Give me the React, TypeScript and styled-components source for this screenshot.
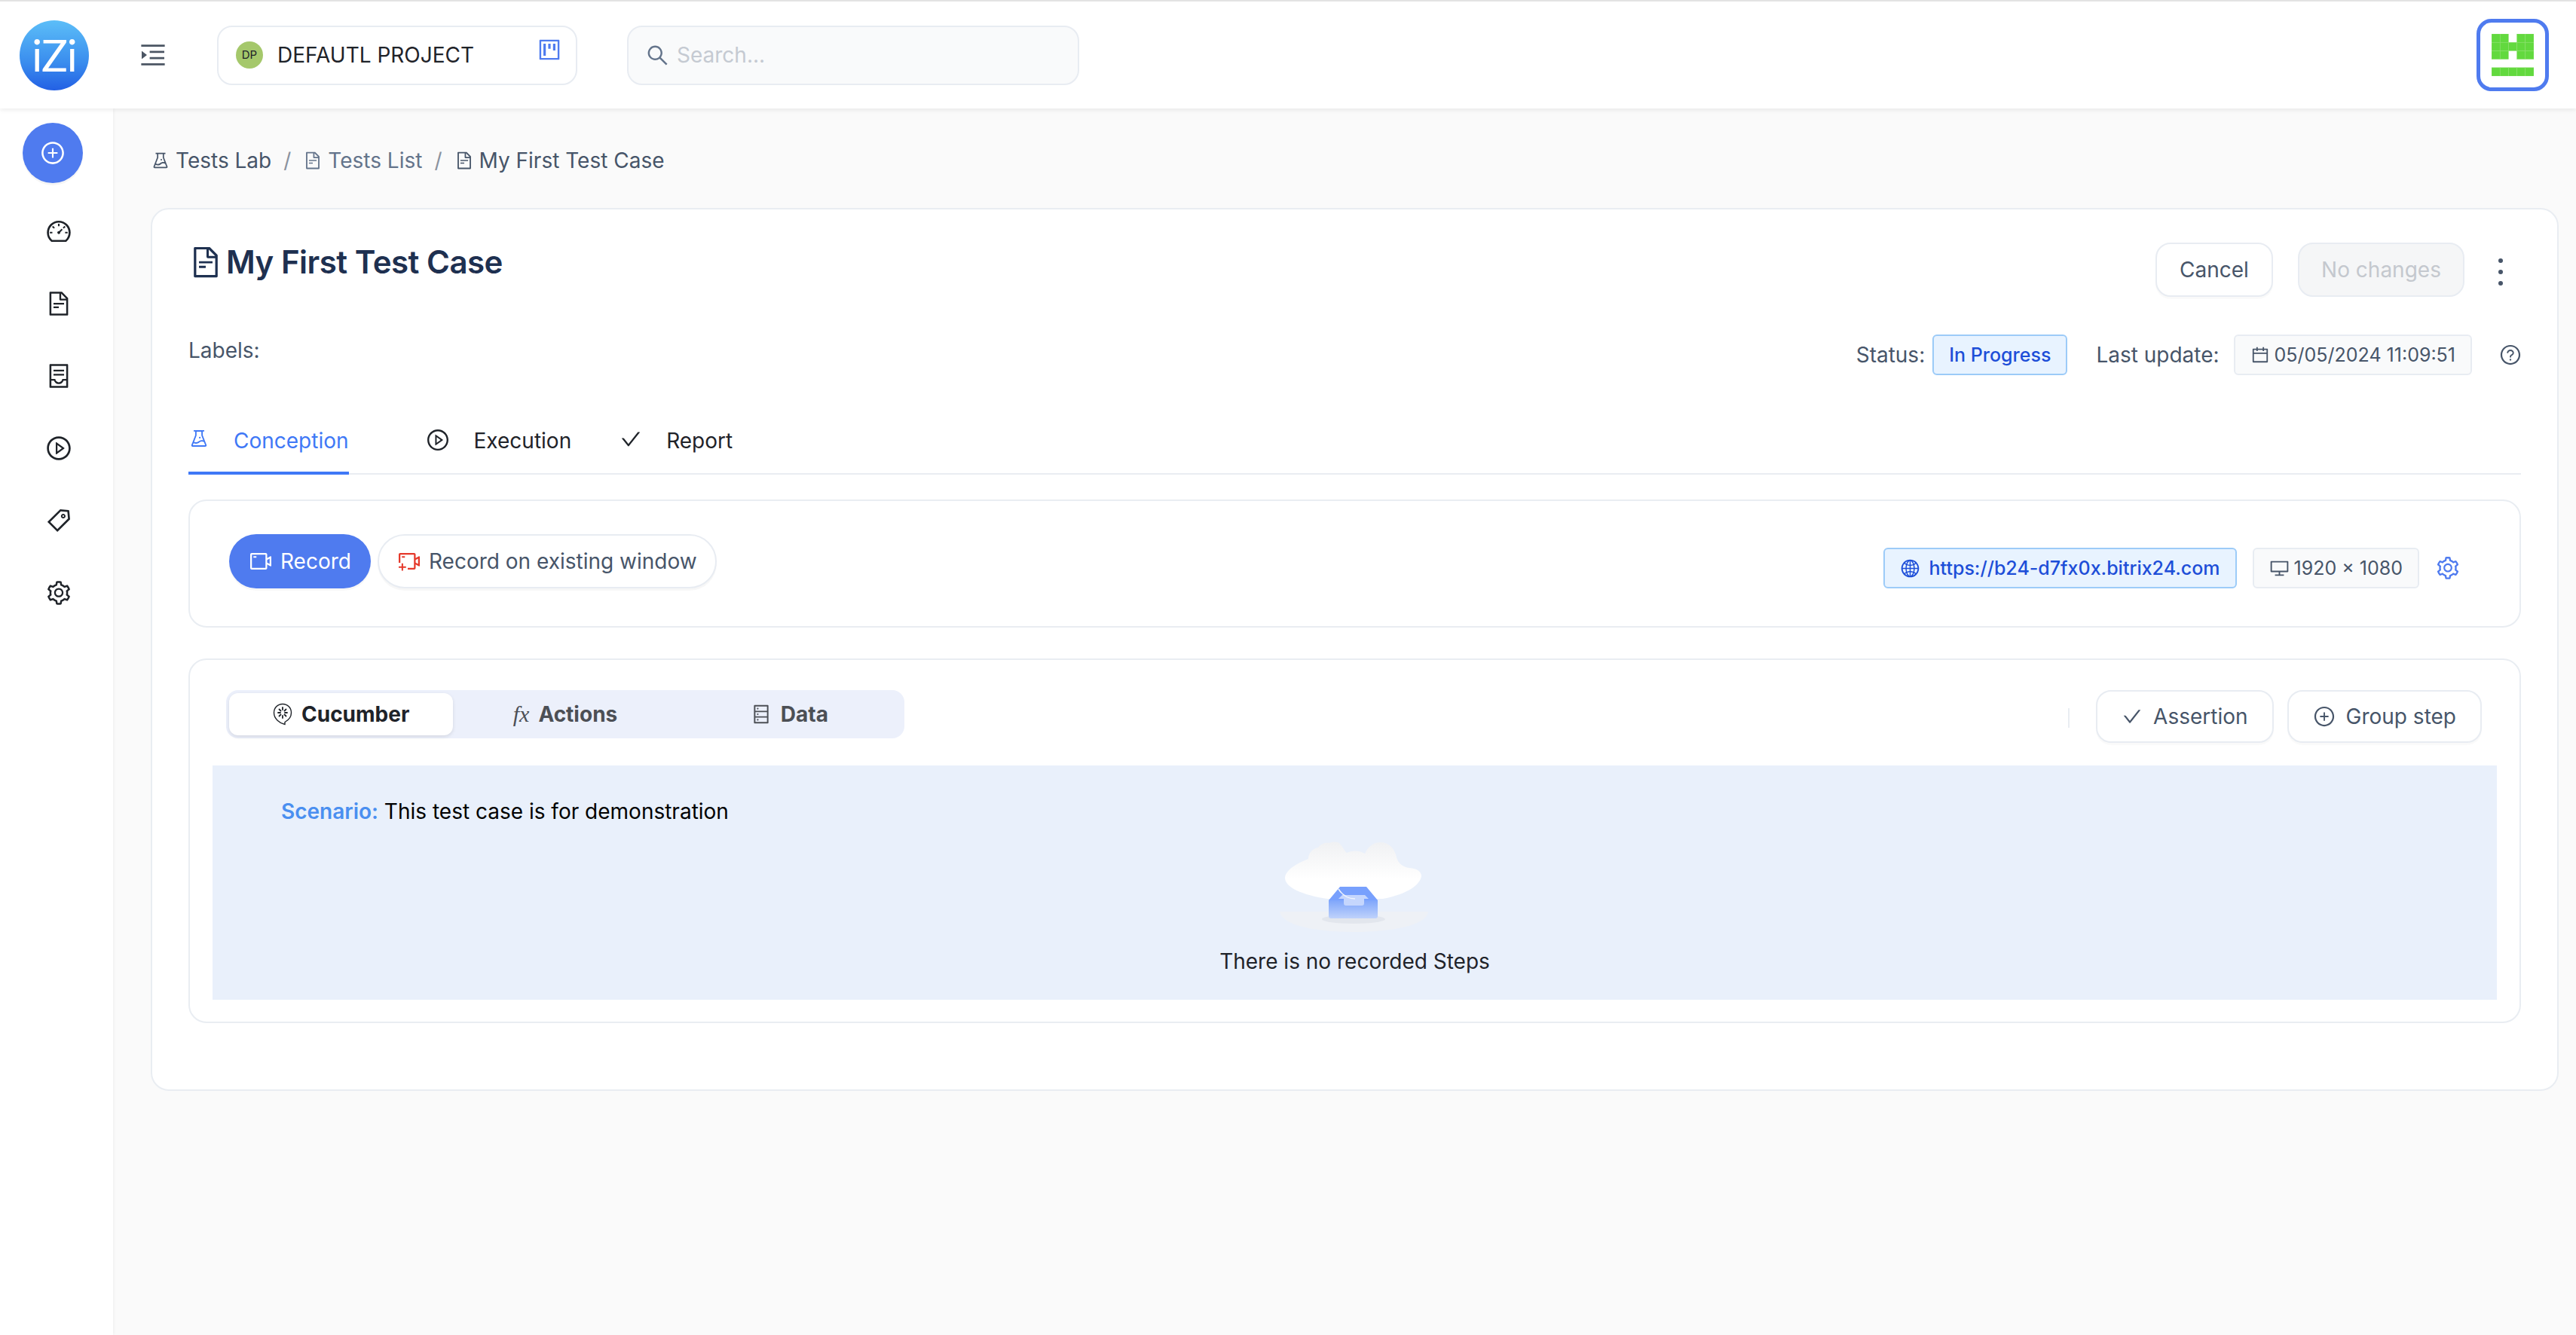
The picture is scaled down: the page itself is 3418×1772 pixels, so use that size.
import * as React from 'react';
import styled, { createGlobalStyle } from 'styled-components';
import {
	AiOutlineCalendar,
	AiOutlineCheck,
	AiOutlineContainer,
	AiOutlineDashboard,
	AiOutlineDatabase,
	AiOutlineDesktop,
	AiOutlineExperiment,
	AiOutlineFileText,
	AiOutlineGlobal,
	AiOutlineMenuUnfold,
	AiOutlinePlayCircle,
	AiOutlinePlusCircle,
	AiOutlineProject,
	AiOutlineQuestionCircle,
	AiOutlineSearch,
	AiOutlineSetting,
	AiOutlineTag,
	AiOutlineVideoCamera,
	AiOutlineVideoCameraAdd,
} from 'react-icons/ai';

const CucumberIcon = () => (
	<svg width="26" height="30" viewBox="0 0 26 30" fill="none" stroke="#1f2329" strokeWidth="1.4">
		<path d="M13 1.5c6.5 0 11.5 5 11.5 11.5 0 6-4 10-8.5 12.5v3C9 27 1.5 21 1.5 13 1.5 6.500 6.500 1.500 13 1.500z" />
		<path d="M13 6v3M13 17v3M7 13h3M16 13h3M8.500 8.500l2 2M15.500 15.500l2 2M17.500 8.500l-2 2M8.500 17.500l2-2" strokeWidth="1.800" strokeLinecap="round" />
	</svg>
);

const Identicon = () => {
	const cells = [
		[0, 0], [1, 0], [3, 0], [4, 0],
		[0, 1], [1, 1], [2, 1], [3, 1], [4, 1],
		[0, 2], [1, 2], [3, 2], [4, 2],
		[0, 4], [1, 4], [2, 4], [3, 4], [4, 4],
	];
	return (
		<svg width="56" height="56" viewBox="0 0 56 56">
			{cells.map(([x, y]) => (
				<rect key={`${x}-${y}`} x={x * 11.2} y={y * 11.2} width="11.2" height="11.2" fill="#62d93e" stroke="#8fe070" strokeWidth="0.5" />
			))}
		</svg>
	);
};

const EmptyCloud = () => (
	<svg width="200" height="130" viewBox="0 0 200 130">
		<defs>
			<linearGradient id="cloudFill" x1="0" y1="0" x2="0" y2="1">
				<stop offset="0" stopColor="#f0f1f3" />
				<stop offset="0.65" stopColor="#ffffff" />
			</linearGradient>
			<linearGradient id="boxFill" x1="0" y1="0" x2="0" y2="1">
				<stop offset="0" stopColor="#7fa6fb" />
				<stop offset="1" stopColor="#bfd2fb" />
			</linearGradient>
		</defs>
		<path d="M0 100H197C195 118 150 127 98 127 46 127 3 118 0 100Z" fill="#eef1f6" />
		<ellipse cx="98" cy="110" rx="42" ry="6" fill="#e2e6ed" />
		<path
			d="M7 55C8 45 22 36 38 30 38 22 44 16 51 15 55 9 62 8 66 9 71 7 77 7 80 10 84 14 86 20 89 22 95 19 105 18 113 23 118 12 126 8 134 8 146 8 153 18 155 28 157 36 164 41 172 42 183 43 188 47 188 53 186 64 172 76 137 83H63C30 78 7 68 7 55Z"
			fill="url(#cloudFill)"
		/>
		<path d="M65 85H130V106Q130 109 127 109H68Q65 109 65 106Z" fill="url(#boxFill)" />
		<path d="M65 85L80 67H115L130 85Z" fill="#78a0fd" />
		<path d="M78 83L83 78H113L118 83H112V89Q112 92 109 92H88Q85 92 85 89V83Z" fill="#c5d6fd" />
		<path d="M78 70C83 78 90 83 100 83" fill="none" stroke="#f2f5fc" strokeWidth="1.500" />
	</svg>
);

const App = () => {
	return (
		<>
			<GlobalStyle />
			<Page>
				<TopBar>
					<Logo>iZi</Logo>
					<MenuToggle>
						<AiOutlineMenuUnfold size={40} />
					</MenuToggle>
					<ProjectBox>
						<ProjectAvatar>DP</ProjectAvatar>
						<ProjectName>DEFAUTL PROJECT</ProjectName>
						<BoardIcon>
							<AiOutlineProject size={34} />
						</BoardIcon>
					</ProjectBox>
					<SearchBox>
						<AiOutlineSearch size={33} />
						<span>Search...</span>
					</SearchBox>
					<UserBox>
						<Identicon />
					</UserBox>
				</TopBar>
				<Body>
					<Sidebar>
						<AddButton>
							<AiOutlinePlusCircle size={34} />
						</AddButton>
						<NavList>
							<NavItem><AiOutlineDashboard size={36} /></NavItem>
							<NavItem><AiOutlineFileText size={36} /></NavItem>
							<NavItem><AiOutlineContainer size={36} /></NavItem>
							<NavItem><AiOutlinePlayCircle size={36} /></NavItem>
							<NavItem><AiOutlineTag size={36} /></NavItem>
							<NavItem><AiOutlineSetting size={36} /></NavItem>
						</NavList>
					</Sidebar>
					<Content>
						<Breadcrumb>
							<Crumb>
								<AiOutlineExperiment size={26} />
								Tests Lab
							</Crumb>
							<CrumbSlash>/</CrumbSlash>
							<Crumb $muted>
								<AiOutlineFileText size={26} />
								Tests List
							</Crumb>
							<CrumbSlash>/</CrumbSlash>
							<Crumb>
								<AiOutlineFileText size={26} />
								My First Test Case
							</Crumb>
						</Breadcrumb>
						<Card>
							<TitleRow>
								<Title>
									<AiOutlineFileText size={46} />
									My First Test Case
								</Title>
								<TitleActions>
									<OutlineButton>Cancel</OutlineButton>
									<DisabledButton>No changes</DisabledButton>
									<MoreButton>
										<i />
										<i />
										<i />
									</MoreButton>
								</TitleActions>
							</TitleRow>
							<MetaRow>
								<MetaLabel>Labels:</MetaLabel>
								<MetaRight>
									<StatusLabel>Status:</StatusLabel>
									<BlueTag>In Progress</BlueTag>
									<UpdateLabel>Last update:</UpdateLabel>
									<GreyTag>
										<AiOutlineCalendar size={26} />
										05/05/2024 11:09:51
									</GreyTag>
									<HelpIcon>
										<AiOutlineQuestionCircle size={30} />
									</HelpIcon>
								</MetaRight>
							</MetaRow>
							<Tabs>
								<Tab $active>
									<AiOutlineExperiment size={28} />
									Conception
								</Tab>
								<Tab>
									<AiOutlinePlayCircle size={32} />
									Execution
								</Tab>
								<Tab>
									<AiOutlineCheck size={30} />
									Report
								</Tab>
							</Tabs>
							<RecordPanel>
								<RecordButtons>
									<RecordButton>
										<AiOutlineVideoCamera size={32} />
										Record
									</RecordButton>
									<ExistingWindowButton>
										<AiOutlineVideoCameraAdd size={32} />
										Record on existing window
									</ExistingWindowButton>
								</RecordButtons>
								<RecordInfo>
									<UrlTag>
										<AiOutlineGlobal size={27} />
										https://b24-d7fx0x.bitrix24.com
									</UrlTag>
									<SizeTag>
										<AiOutlineDesktop size={27} />
										1920 x 1080
									</SizeTag>
									<ConfigIcon>
										<AiOutlineSetting size={34} />
									</ConfigIcon>
								</RecordInfo>
							</RecordPanel>
							<StepsPanel>
								<StepsToolbar>
									<Segments>
										<Segment $active>
											<CucumberIcon />
											Cucumber
										</Segment>
										<Segment>
											<FxMark>fx</FxMark>
											Actions
										</Segment>
										<Segment>
											<AiOutlineDatabase size={28} />
											Data
										</Segment>
									</Segments>
									<ToolbarActions>
										<ToolbarDivider />
										<ToolbarButton>
											<AiOutlineCheck size={28} />
											Assertion
										</ToolbarButton>
										<ToolbarButton>
											<AiOutlinePlusCircle size={30} />
											Group step
										</ToolbarButton>
									</ToolbarActions>
								</StepsToolbar>
								<Scenario>
									<ScenarioLine>
										<b>Scenario:</b> This test case is for demonstration
									</ScenarioLine>
									<EmptyState>
										<EmptyCloud />
										<EmptyText>There is no recorded Steps</EmptyText>
									</EmptyState>
								</Scenario>
							</StepsPanel>
						</Card>
					</Content>
				</Body>
			</Page>
		</>
	);
};

export default App;

const GlobalStyle = createGlobalStyle`
	html, body {
		margin: 0;
		padding: 0;
		background: #fafafa;
	}
	* {
		box-sizing: border-box;
	}
	body {
		font-family: Inter, "Liberation Sans", sans-serif;
		font-size: 28px;
		line-height: 34px;
		color: #475569;
	}
`;

const Page = styled.div`
	width: 3418px;
	height: 1772px;
	display: flex;
	flex-direction: column;
	overflow: hidden;
`;

const TopBar = styled.header`
	height: 144px;
	flex-shrink: 0;
	display: flex;
	align-items: center;
	padding-left: 26px;
	padding-right: 36px;
	background: #fff;
	border-top: 2px solid #e3e3e3;
	box-shadow: 0 2px 6px rgba(0, 0, 0, 0.08);
	position: relative;
	z-index: 2;
`;

const Logo = styled.div`
	width: 92px;
	height: 93px;
	border-radius: 50%;
	background: linear-gradient(180deg, #5cbef8 0%, #3a8dee 60%, #2360e4 100%);
	color: #fff;
	display: flex;
	align-items: center;
	justify-content: center;
	font-family: Lato, sans-serif;
	font-size: 58px;
	line-height: 1;
	letter-spacing: -1px;
`;

const MenuToggle = styled.div`
	display: flex;
	margin-left: 65px;
	color: #4b5563;
`;

const ProjectBox = styled.div`
	width: 478px;
	height: 79px;
	margin-left: 65px;
	display: flex;
	align-items: center;
	padding: 0 18px 0 23px;
	background: #fff;
	border: 2px solid #e8ecf2;
	border-radius: 20px;
`;

const ProjectAvatar = styled.div`
	width: 36px;
	height: 36px;
	border-radius: 50%;
	background: #a5c86b;
	color: #1f2329;
	font-size: 15px;
	display: flex;
	align-items: center;
	justify-content: center;
`;

const ProjectName = styled.div`
	margin-left: 19px;
	color: #1f2329;
	flex: 1;
`;

const BoardIcon = styled.div`
	display: flex;
	align-self: flex-start;
	margin-top: 13px;
	color: #4f7bef;
`;

const SearchBox = styled.div`
	width: 600px;
	height: 79px;
	margin-left: 66px;
	display: flex;
	align-items: center;
	gap: 9px;
	padding-left: 22px;
	background: #f9fafb;
	border: 2px solid #e8ecf2;
	border-radius: 20px;
	color: #c5cad2;

	svg {
		color: #64748b;
	}
`;

const UserBox = styled.div`
	width: 96px;
	height: 96px;
	margin-left: auto;
	display: flex;
	align-items: center;
	justify-content: center;
	background: #fff;
	border: 5px solid #4f7bef;
	border-radius: 20px;
`;

const Body = styled.div`
	flex: 1;
	display: flex;
	min-height: 0;
`;

const Sidebar = styled.aside`
	width: 150px;
	flex-shrink: 0;
	padding-top: 19px;
	background: #fff;
	box-shadow: 1px 0 4px rgba(0, 0, 0, 0.05);
`;

const AddButton = styled.div`
	width: 80px;
	height: 80px;
	margin-left: 30px;
	display: flex;
	align-items: center;
	justify-content: center;
	border-radius: 50%;
	background: #4f7bef;
	color: #fff;
	box-shadow: 0 3px 0 rgba(0, 0, 0, 0.04);
`;

const NavList = styled.nav`
	margin-top: 16px;
`;

const NavItem = styled.div`
	height: 96px;
	display: flex;
	align-items: center;
	padding-left: 60px;
	color: #1f2329;
`;

const Content = styled.main`
	flex: 1;
	min-width: 0;
	padding: 52px 23px 0 50px;
`;

const Breadcrumb = styled.div`
	display: flex;
	align-items: center;
	margin-bottom: 46px;
	height: 34px;
`;

const Crumb = styled.div<{ $muted?: boolean }>`
	display: flex;
	align-items: center;
	gap: 7px;
	color: ${(p) => (p.$muted ? '#64748b' : '#475569')};
`;

const CrumbSlash = styled.span`
	margin: 0 16px;
	color: #8a929e;
`;

const Card = styled.section`
	padding: 44px 48px 88px;
	background: #fff;
	border: 2px solid #e9edf2;
	border-radius: 24px;
`;

const TitleRow = styled.div`
	display: flex;
	justify-content: space-between;
	align-items: flex-start;
	height: 72px;
`;

const Title = styled.h1`
	margin: 0;
	display: flex;
	align-items: center;
	gap: 4px;
	font-size: 42px;
	line-height: 52px;
	font-weight: 600;
	color: #1e3050;
	letter-spacing: -0.5px;
`;

const TitleActions = styled.div`
	display: flex;
	align-items: flex-start;
	margin-right: -3px;
`;

const OutlineButton = styled.div`
	width: 156px;
	height: 72px;
	display: flex;
	align-items: center;
	justify-content: center;
	background: #fff;
	border: 2px solid #e8ecf2;
	border-radius: 20px;
	box-shadow: 0 3px 0 rgba(0, 0, 0, 0.02);
`;

const DisabledButton = styled(OutlineButton)`
	width: 221px;
	margin-left: 33px;
	background: #f5f6f7;
	color: #c4c8ce;
	box-shadow: none;
`;

const MoreButton = styled.div`
	width: 60px;
	height: 78px;
	margin-left: 18px;
	display: flex;
	flex-direction: column;
	align-items: center;
	justify-content: center;
	gap: 9px;

	i {
		width: 6px;
		height: 6px;
		border-radius: 50%;
		background: #475569;
	}
`;

const MetaRow = styled.div`
	display: flex;
	justify-content: space-between;
	margin-top: 50px;
	height: 54px;
`;

const MetaLabel = styled.div`
	padding-top: 4px;
`;

const MetaRight = styled.div`
	display: flex;
	align-items: center;
`;

const StatusLabel = styled.span`
	margin-right: 10px;
`;

const UpdateLabel = styled.span`
	margin: 0 19px 0 38px;
`;

const BlueTag = styled.div`
	height: 54px;
	display: flex;
	align-items: center;
	padding: 0 20px;
	background: #e8f3ff;
	border: 2px solid #9ccbf8;
	border-radius: 6px;
	font-size: 25px;
	font-weight: 500;
	color: #1d4ed8;
`;

const GreyTag = styled(BlueTag)`
	gap: 6px;
	background: #f9fafb;
	border-color: #e8ecf2;
	font-weight: 400;
	color: #475569;
`;

const HelpIcon = styled.div`
	display: flex;
	margin-left: 36px;
	margin-right: -1px;
	color: #475569;
`;

const Tabs = styled.div`
	display: flex;
	height: 66px;
	margin-top: 66px;
	border-bottom: 2px solid #e9edf2;
`;

const Tab = styled.div<{ $active?: boolean }>`
	display: flex;
	align-items: flex-start;
	gap: 32px;
	height: 66px;
	padding-top: 4px;
	color: ${(p) => (p.$active ? '#3f78f6' : '#1f2329')};
	box-shadow: ${(p) => (p.$active ? 'inset 0 -4px 0 #3f78f6' : 'none')};

	&:nth-child(2) {
		margin-left: 102px;
	}
	&:nth-child(3) {
		margin-left: 64px;
	}
`;

const Panel = styled.div`
	background: #fff;
	border: 2px solid #e9edf2;
	border-radius: 24px;
`;

const RecordPanel = styled(Panel)`
	height: 170px;
	margin-top: 33px;
	display: flex;
	justify-content: space-between;
	align-items: flex-start;
	padding: 44px 78px 0 52px;
`;

const RecordButtons = styled.div`
	display: flex;
	gap: 9px;
`;

const RecordButton = styled.div`
	height: 72px;
	display: flex;
	align-items: center;
	gap: 10px;
	padding: 0 26px;
	border-radius: 36px;
	background: #4f7bef;
	color: #fff;
	box-shadow: 0 3px 0 rgba(0, 0, 0, 0.03);
`;

const ExistingWindowButton = styled(RecordButton)`
	padding: 0 24px;
	background: #fff;
	border: 2px solid #e8ecf2;
	color: #475569;

	svg {
		color: #e5392b;
	}
`;

const RecordInfo = styled.div`
	display: flex;
	align-items: center;
	margin-top: 18px;
`;

const UrlTag = styled(BlueTag)`
	gap: 12px;
	padding: 0 20px;
`;

const SizeTag = styled(GreyTag)`
	margin-left: 21px;
`;

const ConfigIcon = styled.div`
	display: flex;
	margin-left: 21px;
	color: #4f7bef;
`;

const StepsPanel = styled(Panel)`
	height: 484px;
	margin-top: 41px;
	padding: 40px 30px 29px;
`;

const StepsToolbar = styled.div`
	display: flex;
	justify-content: space-between;
	height: 71px;
	padding: 0 20px 0 18px;
	margin-bottom: 29px;
`;

const Segments = styled.div`
	width: 900px;
	height: 64px;
	display: grid;
	grid-template-columns: repeat(3, 1fr);
	padding: 4px;
	background: #ecf0fb;
	border-radius: 16px;
`;

const Segment = styled.div<{ $active?: boolean }>`
	display: flex;
	align-items: center;
	justify-content: center;
	gap: 12px;
	font-weight: 700;
	border-radius: 12px;
	color: ${(p) => (p.$active ? '#1f2329' : '#4c4f55')};
	background: ${(p) => (p.$active ? '#fff' : 'transparent')};
	box-shadow: ${(p) => (p.$active ? '0 2px 5px rgba(0, 0, 0, 0.1)' : 'none')};
`;

const FxMark = styled.i`
	font-family: "Liberation Serif", serif;
	font-weight: 400;
	font-size: 30px;
`;

const ToolbarActions = styled.div`
	display: flex;
	align-items: flex-start;
`;

const ToolbarDivider = styled.div`
	width: 2px;
	height: 26px;
	margin: 24px 35px 0 0;
	background: #e9edf2;
`;

const ToolbarButton = styled(OutlineButton)`
	width: auto;
	height: 70px;
	gap: 14px;
	padding: 0 32px;

	& + & {
		margin-left: 18px;
	}
`;

const Scenario = styled.div`
	height: 311px;
	padding-top: 44px;
	background: #e9f0fb;
`;

const ScenarioLine = styled.div`
	padding-left: 91px;
	color: #000;

	b {
		font-weight: 600;
		color: #4a8ff0;
	}
`;

const EmptyState = styled.div`
	display: flex;
	flex-direction: column;
	align-items: center;
	margin-top: 16px;
`;

const EmptyText = styled.div`
	margin-top: 19px;
	color: #1f2329;
`;
